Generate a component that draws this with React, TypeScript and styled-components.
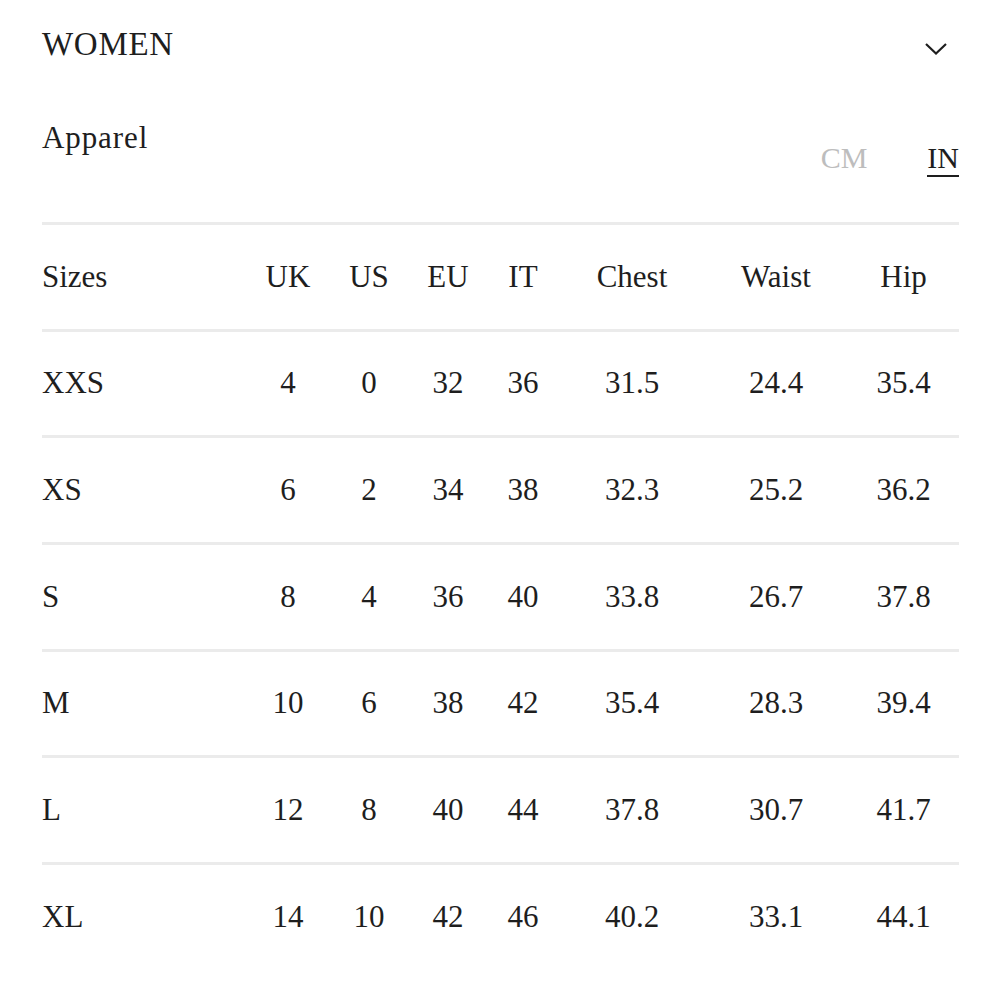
import styled, { createGlobalStyle } from "styled-components";

const GlobalStyle = createGlobalStyle`
  html, body {
    margin: 0;
    padding: 0;
    background: #fff;
  }
  body {
    font-family: "Liberation Serif", "Times New Roman", serif;
    color: #1e1e1e;
  }
`;

const Page = styled.div`
  width: 917px;
  padding: 24px 41px 0 42px;
`;

const TitleRow = styled.div`
  display: flex;
  justify-content: space-between;
  align-items: flex-start;
  height: 40px;
`;

const Title = styled.h2`
  margin: 0;
  font-size: 33px;
  line-height: 40px;
  font-weight: normal;
  letter-spacing: 0.7px;
`;

const Chevron = styled.svg`
  margin-top: 19px;
  margin-right: 12px;
`;

const SubRow = styled.div`
  display: flex;
  justify-content: space-between;
  align-items: flex-start;
  margin-top: 54px;
`;

const SubTitle = styled.h3`
  margin: 0;
  font-size: 31px;
  line-height: 40px;
  font-weight: normal;
  letter-spacing: 0.9px;
`;

const Units = styled.div`
  display: flex;
  gap: 60px;
  margin-top: 25px;
`;

const Unit = styled.span<{ $active?: boolean }>`
  display: inline-block;
  font-size: 30px;
  line-height: 30px;
  padding-bottom: 2px;
  color: ${(p) => (p.$active ? "#1e1e1e" : "#bdbdbd")};
  border-bottom: 2px solid ${(p) => (p.$active ? "#1e1e1e" : "transparent")};
`;

const Table = styled.div`
  margin-top: 45px;
`;

const Row = styled.div`
  display: grid;
  grid-template-columns: 206px 80px 82px 76px 74px 144px 144px 111px;
  align-items: center;
  box-sizing: border-box;
  height: 106.67px;
  border-top: 3px solid #ebebeb;
`;

const Cell = styled.div<{ $left?: boolean }>`
  font-size: 31px;
  line-height: 36px;
  text-align: ${(p) => (p.$left ? "left" : "center")};
`;

const headers = ["Sizes", "UK", "US", "EU", "IT", "Chest", "Waist", "Hip"];

const rows: string[][] = [
  ["XXS", "4", "0", "32", "36", "31.5", "24.4", "35.4"],
  ["XS", "6", "2", "34", "38", "32.3", "25.2", "36.2"],
  ["S", "8", "4", "36", "40", "33.8", "26.7", "37.8"],
  ["M", "10", "6", "38", "42", "35.4", "28.3", "39.4"],
  ["L", "12", "8", "40", "44", "37.8", "30.7", "41.7"],
  ["XL", "14", "10", "42", "46", "40.2", "33.1", "44.1"],
];

export default function App() {
  return (
    <>
      <GlobalStyle />
      <Page>
        <TitleRow>
          <Title>WOMEN</Title>
          <Chevron width="22" height="12" viewBox="0 0 22 12" fill="none">
            <polyline points="1,1 11,10.5 21,1" stroke="#1e1e1e" strokeWidth="2.2" />
          </Chevron>
        </TitleRow>
        <SubRow>
          <SubTitle>Apparel</SubTitle>
          <Units>
            <Unit>CM</Unit>
            <Unit $active>IN</Unit>
          </Units>
        </SubRow>
        <Table>
          <Row>
            {headers.map((h, i) => (
              <Cell key={h} $left={i === 0}>
                {h}
              </Cell>
            ))}
          </Row>
          {rows.map((r) => (
            <Row key={r[0]}>
              {r.map((v, i) => (
                <Cell key={i} $left={i === 0}>
                  {v}
                </Cell>
              ))}
            </Row>
          ))}
        </Table>
      </Page>
    </>
  );
}
